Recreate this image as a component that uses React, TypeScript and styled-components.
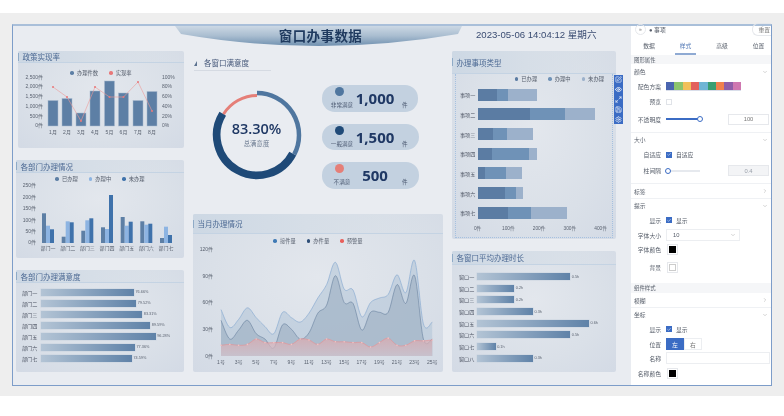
import styled, { createGlobalStyle } from 'styled-components';
import { ChevronDown, ChevronRight, Check, Eye, Maximize2, Save, Settings, SquarePen } from 'lucide-react';

const GlobalStyle = createGlobalStyle`
  html, body {
    margin: 0;
    padding: 0;
    background: #fff;
    font-family: "Liberation Sans", "Noto Sans CJK SC", sans-serif;
  }
  * { box-sizing: border-box; }
`;

const Band = styled.div`
  margin-top: 13px;
  height: 383px;
  padding: 11px 0 0 12px;
  background: #eeeeee;
`;

const Frame = styled.div`
  width: 760px;
  height: 362px;
  display: flex;
  border: 1px solid #7d9dc9;
  border-top: 2px solid #a9bfd9;
  filter: blur(0.45px);
`;

const Canvas = styled.div`
  position: relative;
  width: 618px;
  padding-left: 3px;
  background: #e9ecf1;
`;

const Header = styled.div`
  height: 25px;
  display: flex;
`;

const Banner = styled.div`
  width: 287px;
  height: 22px;
  margin-left: 159px;
  padding-left: 4px;
  display: flex;
  justify-content: center;
  align-items: center;
  background: linear-gradient(180deg, #ccd8e4 0%, #a9bdd0 45%, #6487a9 100%);
  clip-path: path('M0 0 L287 0 L283 8 Q143 32 6 8 Z');
`;

const Title = styled.h1`
  margin: -5px 0 0;
  font-size: 13.5px;
  letter-spacing: 0.4px;
  font-weight: 700;
  color: #1f3a5f;
`;

const DateText = styled.div`
  margin: 2px 0 0 14px;
  font-size: 9.6px;
  line-height: 14px;
  white-space: nowrap;
  color: #3a4c72;
`;

const Columns = styled.div`
  display: grid;
  grid-template-columns: 168px 250px 164px;
  column-gap: 9px;
`;

const Column = styled.div<{ $gap: number }>`
  display: flex;
  flex-direction: column;
  gap: ${(p) => p.$gap}px;
`;

const Card = styled.div<{ $h: number; $inset?: number }>`
  height: ${(p) => p.$h}px;
  margin-left: ${(p) => p.$inset ?? 0}px;
  border-radius: 2px;
  overflow: hidden;
  background: radial-gradient(ellipse at 50% 40%, #e3e7ed 0%, #dae0e8 60%, #d3dae5 100%);
`;

const CardHead = styled.div<{ $h: number }>`
  height: ${(p) => p.$h}px;
  display: flex;
  align-items: center;
  font-size: 7.5px;
  color: #4d6a94;
  white-space: nowrap;
  background: linear-gradient(90deg, #cdd8e4 0%, #d6dee7 45%, rgba(216, 223, 232, 0) 100%);
  border-bottom: 1px solid #c4d3e3;
`;

const Accent = styled.span`
  width: 1px;
  height: 8px;
  margin-right: 3.5px;
  background: #8fabc7;
`;

const Legend = styled.div<{ $mt: number; $end?: boolean }>`
  height: 10px;
  margin-top: ${(p) => p.$mt}px;
  padding-right: ${(p) => (p.$end ? 8 : 0)}px;
  display: flex;
  align-items: center;
  justify-content: ${(p) => (p.$end ? 'flex-end' : 'center')};
  gap: 11px;
  font-size: 5.3px;
  color: #555d6b;
`;

const LegendItem = styled.span`
  display: flex;
  align-items: center;
  gap: 3px;
`;

const LegendDot = styled.i<{ $c: string }>`
  width: 3.5px;
  height: 3.5px;
  border-radius: 50%;
  background: ${(p) => p.$c};
`;

const ChartSvg = styled.svg`
  display: block;
  overflow: visible;
`;

const Tick = styled.text`
  font-size: 5px;
  fill: #5a6270;
`;

const BarList = styled.div<{ $pt: number; $pl: number; $gap: number }>`
  padding: ${(p) => p.$pt}px 0 0 ${(p) => p.$pl}px;
  display: flex;
  flex-direction: column;
  gap: ${(p) => p.$gap}px;
`;

const BarRow = styled.div<{ $h: number }>`
  height: ${(p) => p.$h}px;
  display: flex;
  align-items: center;
`;

const BarLabel = styled.span<{ $w: number }>`
  width: ${(p) => p.$w}px;
  font-size: 5.1px;
  color: #4a5160;
  white-space: nowrap;
`;

const GradBar = styled.div`
  height: 100%;
  background: linear-gradient(90deg, #b3c4d5 0%, #5f82a8 100%);
  box-shadow: 0 0 0 0.5px #c9d4e0;
`;

const BarValue = styled.span`
  margin-left: 1.5px;
  font-size: 3.8px;
  color: #5a6270;
`;

const Selected = styled.div`
  height: 164px;
  margin: 0 3px;
  padding-left: 4px;
  border: 1px dotted #a5c0e0;
  border-top: none;
`;

const Segment = styled.div<{ $c: string }>`
  height: 100%;
  background: ${(p) => p.$c};
`;

const AxisRow = styled.div`
  width: 123px;
  margin: 5px 0 0 17.7px;
  display: flex;
  justify-content: space-between;
`;

const AxisTick = styled.span`
  width: 0;
  display: flex;
  justify-content: center;
  font-size: 4.8px;
  color: #5a6270;
  white-space: nowrap;
`;

const ToolStrip = styled.div`
  position: absolute;
  left: 601px;
  top: 49px;
  width: 9px;
  height: 49px;
  padding: 1px 0;
  display: flex;
  flex-direction: column;
  align-items: center;
  justify-content: space-between;
  color: #fff;
  background: #3b6cc4;
`;

const Satisfaction = styled.div`
  height: 163px;
`;

const SatHead = styled.div`
  width: 77px;
  height: 20px;
  margin-left: 1px;
  padding-bottom: 2px;
  display: flex;
  align-items: flex-end;
  gap: 7px;
  font-size: 7.5px;
  color: #46587a;
  border-bottom: 1px solid #d5dae2;
`;

const SatMark = styled.svg`
  margin-bottom: 2px;
`;

const SatBody = styled.div`
  display: flex;
  align-items: flex-start;
`;

const RingWrap = styled.div`
  position: relative;
  width: 90px;
  height: 90px;
  margin: 19px 0 0 18.5px;
`;

const RingCenter = styled.div`
  position: absolute;
  inset: 0 0 2px;
  display: flex;
  flex-direction: column;
  align-items: center;
  justify-content: center;
`;

const RingValue = styled.div`
  font-family: "Open Sans", sans-serif;
  font-size: 14.5px;
  line-height: 18px;
  font-weight: 600;
  color: #1f3864;
`;

const RingLabel = styled.div`
  margin-top: 1px;
  font-size: 6.4px;
  color: #6b7a90;
`;

const PillColumn = styled.div`
  margin: 14px 0 0 20.5px;
  display: flex;
  flex-direction: column;
  gap: 12px;
`;

const Pill = styled.div<{ $w: number }>`
  width: ${(p) => p.$w}px;
  height: 26.5px;
  padding-left: 8px;
  display: flex;
  border-radius: 13px;
  background: #c3d1e0;
`;

const PillLeft = styled.div`
  width: 24px;
  padding-top: 2px;
  display: flex;
  flex-direction: column;
  align-items: center;
`;

const PillDot = styled.i<{ $c: string }>`
  width: 9px;
  height: 9px;
  margin-right: 5px;
  border-radius: 50%;
  background: ${(p) => p.$c};
`;

const PillLabel = styled.span`
  margin-top: 5px;
  font-size: 5.6px;
  line-height: 8px;
  color: #4c5a72;
  white-space: nowrap;
`;

const PillNumber = styled.div`
  width: 42px;
  padding-top: 4px;
  text-align: center;
  font-family: "Open Sans", sans-serif;
  font-size: 15px;
  line-height: 18px;
  font-weight: 700;
  color: #1f3864;
`;

const PillUnit = styled.span`
  margin: 16px 0 0 6px;
  font-size: 5.6px;
  line-height: 8px;
  color: #4c5a72;
`;

const Panel = styled.div`
  width: 140px;
  font-size: 5.8px;
  color: #555c68;
  background: #fff;
`;

const PanelTop = styled.div`
  height: 11px;
  padding: 0 0 5px 4px;
  display: flex;
  align-items: center;
  justify-content: space-between;
`;

const PanelName = styled.span`
  flex: 1;
  margin-left: 3px;
`;

const RoundBtn = styled.span`
  width: 11px;
  height: 11px;
  display: flex;
  align-items: center;
  justify-content: center;
  border: 1px solid #e6e8ec;
  border-radius: 50%;
  font-size: 5px;
  color: #777;
`;

const ResetBtn = styled.span`
  padding: 1px 1px 1px 5px;
  border: 1px solid #e6e8ec;
  border-right: none;
  border-radius: 6px 0 0 6px;
  color: #777;
`;

const Tabs = styled.div`
  height: 18px;
  display: grid;
  grid-template-columns: 36px 37px 36px 37px;
`;

const TabItem = styled.span<{ $active?: boolean }>`
  display: flex;
  align-items: center;
  justify-content: center;
  margin: 0 8px;
  color: ${(p) => (p.$active ? '#5077b5' : '#555c68')};
  border-bottom: 2px solid ${(p) => (p.$active ? '#8faad3' : 'transparent')};
`;

const SectionBar = styled.div<{ $h: number }>`
  height: ${(p) => p.$h}px;
  display: flex;
  align-items: center;
  padding-left: 3px;
  font-size: 5.4px;
  background: #f5f6f8;
`;

const GroupHead = styled.div<{ $h: number; $line?: boolean }>`
  height: ${(p) => p.$h}px;
  padding: 0 3px;
  display: flex;
  align-items: center;
  justify-content: space-between;
  border-top: ${(p) => (p.$line ? '1px solid #eff1f4' : 'none')};
`;

const Field = styled.div<{ $h: number; $mb?: number }>`
  height: ${(p) => p.$h}px;
  margin-bottom: ${(p) => p.$mb ?? 0}px;
  display: flex;
  align-items: center;
`;

const FieldLabel = styled.span`
  width: 30px;
  margin-right: 5px;
  text-align: right;
  white-space: nowrap;
`;

const Palette = styled.div`
  display: flex;
  border-bottom: 1px solid #d9deea;
`;

const Swatch = styled.i<{ $c: string }>`
  width: 8.33px;
  height: 8px;
  background: ${(p) => p.$c};
`;

const CheckBox = styled.span<{ $on?: boolean }>`
  width: 6px;
  height: 6px;
  margin-right: 4px;
  display: flex;
  align-items: center;
  justify-content: center;
  color: #fff;
  border: 1px solid ${(p) => (p.$on ? '#3b6cc4' : '#e0e3e8')};
  background: ${(p) => (p.$on ? '#3b6cc4' : '#fff')};
`;

const Track = styled.div<{ $on?: boolean }>`
  position: relative;
  width: 34px;
  height: 2px;
  margin-right: 28px;
  background: ${(p) => (p.$on ? '#3b6cc4' : '#e6e9ee')};
`;

const Thumb = styled.i<{ $left: number }>`
  position: absolute;
  left: ${(p) => p.$left}px;
  top: -2px;
  width: 6px;
  height: 6px;
  border-radius: 50%;
  background: #fff;
  border: 1px solid #3b6cc4;
`;

const NumberBox = styled.div<{ $off?: boolean }>`
  width: 41px;
  height: 11px;
  display: flex;
  align-items: center;
  justify-content: center;
  border: 1px solid #e6e8ec;
  color: ${(p) => (p.$off ? '#9aa0aa' : '#777')};
  background: ${(p) => (p.$off ? '#f3f4f6' : '#fff')};
`;

const SelectBox = styled.div`
  width: 74px;
  height: 12px;
  padding: 0 3px 0 6px;
  display: flex;
  align-items: center;
  justify-content: space-between;
  border: 1px solid #eceef1;
`;

const ColorChip = styled.div<{ $c: string }>`
  width: 11px;
  height: 11px;
  margin-left: 1px;
  padding: 1px;
  display: flex;
  border: 1px solid #e6e8ec;
  i {
    flex: 1;
    background: ${(p) => p.$c};
    border: ${(p) => (p.$c === '#fff' ? '1px solid #ccc' : 'none')};
  }
`;

const Toggle = styled.span<{ $on?: boolean }>`
  width: 18px;
  height: 12px;
  display: flex;
  align-items: center;
  justify-content: center;
  color: ${(p) => (p.$on ? '#fff' : '#777')};
  background: ${(p) => (p.$on ? '#3b6cc4' : '#fff')};
  border: 1px solid ${(p) => (p.$on ? '#3b6cc4' : '#eceef1')};
`;

const TextInput = styled.div`
  width: 104px;
  height: 12px;
  border: 1px solid #eceef1;
`;

const months = ['1月', '2月', '3月', '4月', '5月', '6月', '7月', '8月'];
const monthX = [53, 67, 81, 95, 109.5, 123.5, 138, 152];
const monthTop = [100.5, 98.5, 113, 91, 81, 93, 100.5, 91.5];
const rateY = [87, 97, 121, 87, 97, 97, 82, 111];
const leftTicks = ['2,500件', '2,000件', '1,500件', '1,000件', '500件', '0件'];
const rightTicks = ['100%', '80%', '60%', '40%', '20%', '0%'];

const depts = ['部门一', '部门二', '部门三', '部门四', '部门五', '部门六', '部门七'];
const deptX = [42, 61.7, 81.3, 101, 120.7, 140.3, 160];
const deptTops = [
  [214.3, 226.7, 230.3],
  [237.7, 222.3, 223.3],
  [231.7, 221.3, 219.3],
  [228.3, 230, 196],
  [218, 226.7, 222.7],
  [222.3, 225.7, 224.7],
  [239, 227.7, 236],
];
const deptColors = ['#5d7fa5', '#8db4e2', '#3f72ab'];

const deptScores = [
  ['部门一', 93.5, '76.66%'],
  ['部门二', 95.8, '79.52%'],
  ['部门三', 101.8, '83.31%'],
  ['部门四', 109.8, '89.59%'],
  ['部门五', 115.2, '96.28%'],
  ['部门六', 94.5, '77.36%'],
  ['部门七', 91.5, '74.59%'],
] as const;

const windowTimes = [
  ['窗口一', 93.3, '0.5h'],
  ['窗口二', 37.3, '0.2h'],
  ['窗口三', 37.3, '0.2h'],
  ['窗口四', 56, '0.3h'],
  ['窗口五', 112, '0.6h'],
  ['窗口六', 93.3, '0.5h'],
  ['窗口七', 18.7, '0.1h'],
  ['窗口八', 56, '0.3h'],
] as const;

const stacks = [
  ['事项一', 19.3, 10.7, 29.3],
  ['事项二', 52.3, 35.3, 29.3],
  ['事项三', 15.7, 13.7, 26.3],
  ['事项四', 14.3, 37, 7.7],
  ['事项五', 7.3, 21, 15.7],
  ['事项六', 27.3, 11, 7],
  ['事项七', 30, 23.3, 35.7],
] as const;

const received = [52, 32, 41, 54, 43, 33, 25, 49, 43, 38, 48, 65, 80, 105, 75, 74, 44, 60, 65, 69, 91, 71, 107, 36, 38];
const handled = [40, 19, 29, 40, 25, 19, 9, 35, 30, 19, 26, 48, 57, 90, 60, 59, 29, 49, 49, 49, 80, 59, 90, 19, 19];
const overdue = [12, 13, 12, 13, 19, 15, 15, 15, 13, 19, 18, 13, 19, 16, 16, 15, 15, 10, 15, 20, 12, 12, 17, 17, 18];

const px = (i: number) => 221 + 8.8 * i;
const py = (v: number) => 356 - v * 0.892;

const smoothLine = (values: number[]) => {
  const pts = values.map((v, i) => [px(i), py(v)]);
  let d = `M${pts[0][0]} ${pts[0][1]}`;
  for (let i = 0; i < pts.length - 1; i++) {
    const p0 = pts[Math.max(i - 1, 0)];
    const p1 = pts[i];
    const p2 = pts[i + 1];
    const p3 = pts[Math.min(i + 2, pts.length - 1)];
    const c1 = [p1[0] + (p2[0] - p0[0]) / 6, p1[1] + (p2[1] - p0[1]) / 6];
    const c2 = [p2[0] - (p3[0] - p1[0]) / 6, p2[1] - (p3[1] - p1[1]) / 6];
    d += ` C${c1[0]} ${c1[1]} ${c2[0]} ${c2[1]} ${p2[0]} ${p2[1]}`;
  }
  return d;
};
const smoothArea = (values: number[]) => `${smoothLine(values)} L${px(24)} 356 L${px(0)} 356 Z`;

const arc = (r: number, from: number, to: number) => {
  const pt = (deg: number) => {
    const a = ((deg - 90) * Math.PI) / 180;
    return `${45 + r * Math.cos(a)} ${45 + r * Math.sin(a)}`;
  };
  return `M${pt(from)} A${r} ${r} 0 ${to - from > 180 ? 1 : 0} 1 ${pt(to)}`;
};

function PolicyChart() {
  return (
    <ChartSvg width={165} height={70} viewBox="18 78 165 70">
      {leftTicks.map((t, i) => (
        <Tick key={t} x={43} y={78.5 + i * 9.75} textAnchor="end">{t}</Tick>
      ))}
      {rightTicks.map((t, i) => (
        <Tick key={t} x={162} y={78.5 + i * 9.75}>{t}</Tick>
      ))}
      {monthX.map((x, i) => (
        <rect key={x} x={x - 5} y={monthTop[i]} width={10} height={126 - monthTop[i]} fill="#5d7fa5" stroke="#a9bacd" strokeWidth={0.5} />
      ))}
      <polyline points={monthX.map((x, i) => `${x},${rateY[i]}`).join(' ')} fill="none" stroke="#ec9a98" strokeWidth={0.6} />
      {monthX.map((x, i) => (
        <circle key={x} cx={x} cy={rateY[i]} r={1} fill="#e8787a" />
      ))}
      {months.map((m, i) => (
        <Tick key={m} x={monthX[i]} y={133.5} textAnchor="middle">{m}</Tick>
      ))}
    </ChartSvg>
  );
}

function DeptChart() {
  return (
    <ChartSvg width={168} height={73} viewBox="16 185 168 73">
      {['250件', '200件', '150件', '100件', '50件', '0件'].map((t, i) => (
        <Tick key={t} x={36} y={188.3 + i * 11.4} textAnchor="end">{t}</Tick>
      ))}
      {deptX.map((x, g) =>
        deptTops[g].map((top, b) => (
          <rect key={b} x={x + b * 4} y={top} width={4} height={244 - top} fill={deptColors[b]} />
        )),
      )}
      {depts.map((d, i) => (
        <Tick key={d} x={deptX[i] + 6} y={251} textAnchor="middle">{d}</Tick>
      ))}
    </ChartSvg>
  );
}

function MonthChart() {
  const days = Array.from({ length: 13 }, (_, i) => i * 2);
  return (
    <ChartSvg width={250} height={126} viewBox="193 246 250 126">
      <defs>
        <linearGradient id="redFill" x1="0" y1="0" x2="0" y2="1">
          <stop offset="0" stopColor="#dfa9ad" stopOpacity={0.7} />
          <stop offset="1" stopColor="#d4c3cc" stopOpacity={0.7} />
        </linearGradient>
      </defs>
      {['120件', '90件', '60件', '30件', '0件'].map((t, i) => (
        <Tick key={t} x={213} y={250.8 + i * 26.8} textAnchor="end">{t}</Tick>
      ))}
      <path d={smoothArea(received)} fill="#b4c6d9" fillOpacity={0.6} />
      <path d={smoothLine(received)} fill="none" stroke="#8dadd2" strokeWidth={0.7} />
      <path d={smoothArea(handled)} fill="#93a7bb" fillOpacity={0.5} />
      <path d={smoothLine(handled)} fill="none" stroke="#5a7494" strokeWidth={0.5} />
      <path d={smoothArea(overdue)} fill="url(#redFill)" />
      <path d={smoothLine(overdue)} fill="none" stroke="#ea8f90" strokeWidth={0.6} />
      {overdue.map((v, i) => (
        <circle key={i} cx={px(i)} cy={py(v)} r={0.8} fill="#f3c3c4" />
      ))}
      {days.map((d) => (
        <Tick key={d} x={px(d)} y={364} textAnchor="middle">{d + 1}号</Tick>
      ))}
    </ChartSvg>
  );
}

function Ring() {
  return (
    <svg width={90} height={90} viewBox="0 0 90 90">
      <path d={arc(39.5, 301.8, 360)} fill="none" stroke="#e57f78" strokeWidth={3} />
      <path d={arc(42, 0, 117.5)} fill="none" stroke="#4f769f" strokeWidth={4.5} />
      <path d={arc(40.3, 117.5, 301.8)} fill="none" stroke="#1f4a78" strokeWidth={7.7} />
    </svg>
  );
}

function App() {
  return (
    <>
      <GlobalStyle />
      <Band>
        <Frame>
          <Canvas>
            <Header>
              <Banner>
                <Title>窗口办事数据</Title>
              </Banner>
              <DateText>2023-05-06 14:04:12 星期六</DateText>
            </Header>
            <Columns>
              <Column $gap={12}>
                <Card $h={97} $inset={2}>
                  <CardHead $h={12}><Accent />政策实现率</CardHead>
                  <Legend $mt={5}>
                    <LegendItem><LegendDot $c="#5d7fa5" />办理件数</LegendItem>
                    <LegendItem><LegendDot $c="#e8787a" />实现率</LegendItem>
                  </Legend>
                  <PolicyChart />
                </Card>
                <Card $h={98}>
                  <CardHead $h={13}><Accent />各部门办理情况</CardHead>
                  <Legend $mt={1}>
                    <LegendItem><LegendDot $c="#5d7fa5" />已办理</LegendItem>
                    <LegendItem><LegendDot $c="#8db4e2" />办理中</LegendItem>
                    <LegendItem><LegendDot $c="#3f72ab" />未办理</LegendItem>
                  </Legend>
                  <DeptChart />
                </Card>
                <Card $h={102}>
                  <CardHead $h={13}><Accent />各部门办理满意度</CardHead>
                  <BarList $pt={5.5} $pl={6} $gap={4}>
                    {deptScores.map(([name, width, value]) => (
                      <BarRow key={name} $h={7}>
                        <BarLabel $w={18.5}>{name}</BarLabel>
                        <GradBar style={{ width }} />
                        <BarValue>{value}</BarValue>
                      </BarRow>
                    ))}
                  </BarList>
                </Card>
              </Column>
              <Column $gap={0}>
                <Satisfaction>
                  <SatHead>
                    <SatMark width={3} height={5} viewBox="0 0 3 5">
                      <path d="M3 0 L3 5 L0 5 Z" fill="#5c7290" />
                    </SatMark>
                    各窗口满意度
                  </SatHead>
                  <SatBody>
                    <RingWrap>
                      <Ring />
                      <RingCenter>
                        <RingValue>83.30%</RingValue>
                        <RingLabel>总满意度</RingLabel>
                      </RingCenter>
                    </RingWrap>
                    <PillColumn>
                      <Pill $w={96}>
                        <PillLeft><PillDot $c="#4f769f" /><PillLabel>非常满意</PillLabel></PillLeft>
                        <PillNumber>1,000</PillNumber>
                        <PillUnit>件</PillUnit>
                      </Pill>
                      <Pill $w={97}>
                        <PillLeft><PillDot $c="#1f4a78" /><PillLabel>一般满意</PillLabel></PillLeft>
                        <PillNumber>1,500</PillNumber>
                        <PillUnit>件</PillUnit>
                      </Pill>
                      <Pill $w={97}>
                        <PillLeft><PillDot $c="#e57f78" /><PillLabel>不满意</PillLabel></PillLeft>
                        <PillNumber>500</PillNumber>
                        <PillUnit>件</PillUnit>
                      </Pill>
                    </PillColumn>
                  </SatBody>
                </Satisfaction>
                <Card $h={158}>
                  <CardHead $h={20}><Accent />当月办理情况</CardHead>
                  <Legend $mt={2}>
                    <LegendItem><LegendDot $c="#3f7ab5" />接件量</LegendItem>
                    <LegendItem><LegendDot $c="#2f4f78" />办件量</LegendItem>
                    <LegendItem><LegendDot $c="#e8605c" />预警量</LegendItem>
                  </Legend>
                  <MonthChart />
                </Card>
              </Column>
              <Column $gap={12}>
                <Card $h={188}>
                  <CardHead $h={23}><Accent />办理事项类型</CardHead>
                  <Selected>
                    <Legend $end $mt={0}>
                      <LegendItem><LegendDot $c="#5b7ca3" />已办理</LegendItem>
                      <LegendItem><LegendDot $c="#6f92b7" />办理中</LegendItem>
                      <LegendItem><LegendDot $c="#9cb1cb" />未办理</LegendItem>
                    </Legend>
                    <BarList $pt={4.7} $pl={0} $gap={7.7}>
                      {stacks.map(([name, a, b, c]) => (
                        <BarRow key={name} $h={12}>
                          <BarLabel $w={17.7}>{name}</BarLabel>
                          <Segment $c="#5b7ca3" style={{ width: a }} />
                          <Segment $c="#6f92b7" style={{ width: b }} />
                          <Segment $c="#9cb1cb" style={{ width: c }} />
                        </BarRow>
                      ))}
                    </BarList>
                    <AxisRow>
                      {['0件', '100件', '200件', '300件', '400件'].map((t) => (
                        <AxisTick key={t}>{t}</AxisTick>
                      ))}
                    </AxisRow>
                  </Selected>
                </Card>
                <Card $h={121}>
                  <CardHead $h={14}><Accent />各窗口平均办理时长</CardHead>
                  <BarList $pt={8} $pl={7} $gap={4.7}>
                    {windowTimes.map(([name, width, value]) => (
                      <BarRow key={name} $h={7}>
                        <BarLabel $w={18}>{name}</BarLabel>
                        <GradBar style={{ width }} />
                        <BarValue>{value}</BarValue>
                      </BarRow>
                    ))}
                  </BarList>
                </Card>
              </Column>
            </Columns>
            <ToolStrip>
              <SquarePen size={7} strokeWidth={2} />
              <Eye size={7} strokeWidth={2.5} />
              <Maximize2 size={7} strokeWidth={2} />
              <Save size={7} strokeWidth={2} />
              <Settings size={7} strokeWidth={2} />
            </ToolStrip>
          </Canvas>
          <Panel>
            <PanelTop>
              <RoundBtn>»</RoundBtn>
              <PanelName>● 事项</PanelName>
              <ResetBtn>重置</ResetBtn>
            </PanelTop>
            <Tabs>
              <TabItem>数据</TabItem>
              <TabItem $active>样式</TabItem>
              <TabItem>高级</TabItem>
              <TabItem>位置</TabItem>
            </Tabs>
            <SectionBar $h={9}>图形属性</SectionBar>
            <GroupHead $h={15}>颜色<ChevronDown size={6} color="#aaa" /></GroupHead>
            <Field $h={14}>
              <FieldLabel>配色方案</FieldLabel>
              <Palette>
                {['#4a65b0', '#8cc46e', '#f2c05a', '#e2615c', '#6fb5d5', '#3a9e72', '#f0804e', '#8f5ea8', '#cf77b0'].map((c) => (
                  <Swatch key={c} $c={c} />
                ))}
              </Palette>
            </Field>
            <Field $h={17}>
              <FieldLabel>预览</FieldLabel>
              <CheckBox />
            </Field>
            <Field $h={18} $mb={4}>
              <FieldLabel>不透明度</FieldLabel>
              <Track $on><Thumb $left={31} /></Track>
              <NumberBox>100</NumberBox>
            </Field>
            <GroupHead $h={14} $line>大小<ChevronDown size={6} color="#aaa" /></GroupHead>
            <Field $h={17}>
              <FieldLabel>自适应</FieldLabel>
              <CheckBox $on><Check size={5} strokeWidth={3} /></CheckBox>
              自适应
            </Field>
            <Field $h={15} $mb={5}>
              <FieldLabel>柱间隔</FieldLabel>
              <Track><Thumb $left={-1} /></Track>
              <NumberBox $off>0.4</NumberBox>
            </Field>
            <GroupHead $h={15} $line>标签<ChevronRight size={6} color="#aaa" /></GroupHead>
            <GroupHead $h={14} $line>提示<ChevronDown size={6} color="#aaa" /></GroupHead>
            <Field $h={16}>
              <FieldLabel>显示</FieldLabel>
              <CheckBox $on><Check size={5} strokeWidth={3} /></CheckBox>
              显示
            </Field>
            <Field $h={14}>
              <FieldLabel>字体大小</FieldLabel>
              <SelectBox>10<ChevronDown size={6} color="#aaa" /></SelectBox>
            </Field>
            <Field $h={15}>
              <FieldLabel>字体颜色</FieldLabel>
              <ColorChip $c="#000"><i /></ColorChip>
            </Field>
            <Field $h={21} $mb={5}>
              <FieldLabel>背景</FieldLabel>
              <ColorChip $c="#fff"><i /></ColorChip>
            </Field>
            <SectionBar $h={10}>组件样式</SectionBar>
            <GroupHead $h={14}>模糊<ChevronRight size={6} color="#aaa" /></GroupHead>
            <GroupHead $h={14} $line>坐标<ChevronDown size={6} color="#aaa" /></GroupHead>
            <Field $h={16}>
              <FieldLabel>显示</FieldLabel>
              <CheckBox $on><Check size={5} strokeWidth={3} /></CheckBox>
              显示
            </Field>
            <Field $h={14}>
              <FieldLabel>位置</FieldLabel>
              <Toggle $on>左</Toggle>
              <Toggle>右</Toggle>
            </Field>
            <Field $h={14}>
              <FieldLabel>名称</FieldLabel>
              <TextInput />
            </Field>
            <Field $h={16}>
              <FieldLabel>名称颜色</FieldLabel>
              <ColorChip $c="#000"><i /></ColorChip>
            </Field>
          </Panel>
        </Frame>
      </Band>
    </>
  );
}

export default App;
